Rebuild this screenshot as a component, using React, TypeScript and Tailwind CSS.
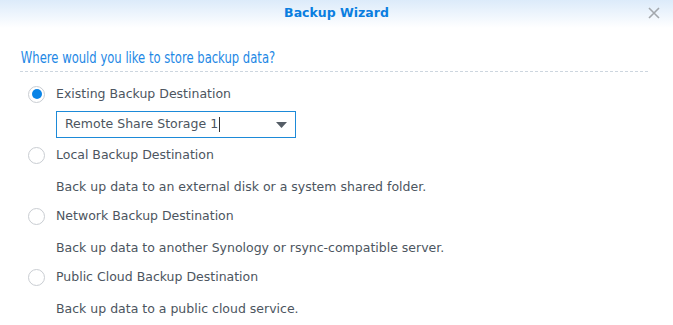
import React, { useState } from 'react';

const options = [
  { id: 'existing', label: 'Existing Backup Destination', desc: '' },
  { id: 'local', label: 'Local Backup Destination', desc: 'Back up data to an external disk or a system shared folder.' },
  { id: 'network', label: 'Network Backup Destination', desc: 'Back up data to another Synology or rsync-compatible server.' },
  { id: 'cloud', label: 'Public Cloud Backup Destination', desc: 'Back up data to a public cloud service.' }
];

const Radio = ({ checked }: { checked: boolean }) => (
  <span className="w-[17px] h-[17px] rounded-full border border-[#c9cdd2] bg-white flex items-center justify-center shrink-0">
    {checked && <span className="w-[10px] h-[10px] rounded-full bg-[#0a84e6]" />}
  </span>
);

export default function App() {
  const [selected, setSelected] = useState('existing');

  return (
    <div className="w-[673px] h-[325px] bg-white overflow-hidden" style={{ fontFamily: '"DejaVu Sans", Verdana, sans-serif' }}>
      <div className="relative h-[28px] bg-gradient-to-b from-[#dcebfa] to-white flex items-center justify-center">
        <span className="text-[12.5px] font-bold text-[#0a7ee0] -mt-[2px]">Backup Wizard</span>
        <svg className="absolute right-[13px] top-[7px]" width="12" height="12" viewBox="0 0 12 12">
          <path d="M1 1 L11 11 M11 1 L1 11" stroke="#a3a8ad" strokeWidth="1.6" />
        </svg>
      </div>

      <div className="px-[20px] pt-[21px]">
        <div className="leading-[18px] pb-[4px] border-b border-dashed border-[#cdd6df] mr-[5px]">
          <span className="inline-block text-[15px] text-[#1e88e5] pl-[1px] origin-left font-['DejaVu_Sans_Condensed','DejaVu_Sans',sans-serif] font-stretch-condensed [transform:scaleX(0.86)] whitespace-nowrap">
            Where would you like to store backup data?
          </span>
        </div>

        <div className="pt-[12px] text-[12.5px] text-[#4c5560]">
          {options.map((o) => (
            <div key={o.id}>
              <label className="flex items-center gap-[11px] h-[20px] pl-[8px] cursor-pointer" onClick={() => setSelected(o.id)}>
                <Radio checked={selected === o.id} />
                <span>{o.label}</span>
              </label>
              {o.id === 'existing' ? (
                <div className="pl-[36px] pt-[7px] pb-[7px]">
                  <div className="w-[240px] h-[27px] border border-[#1d8ad8] flex items-center justify-between pl-[8px] pr-[8px]">
                    <span className="text-[12.5px] text-[#4c5560]">Remote Share Storage 1<span className="inline-block w-px h-[15px] bg-[#333] align-middle ml-px" /></span>
                    <svg width="11" height="6" viewBox="0 0 11 6"><path d="M0 0 H11 L5.5 6 Z" fill="#555d66" /></svg>
                  </div>
                </div>
              ) : (
                <div className="pl-[36px] h-[41px] pt-[4px] flex items-center">{o.desc}</div>
              )}
            </div>
          ))}
        </div>
      </div>
    </div>
  );
}
